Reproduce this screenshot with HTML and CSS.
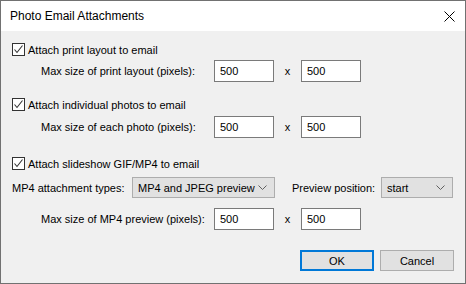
FILE: index.html
```html
<!DOCTYPE html>
<html>
<head>
<meta charset="utf-8">
<link rel="stylesheet" href="styles.css">
</head>
<body>
<div class="window">
  <div class="titlebar">
    <span class="title">Photo Email Attachments</span>
    <svg class="close" width="11" height="11" viewBox="0 0 11 11"><path d="M0.5 0.5 L10.5 10.5 M10.5 0.5 L0.5 10.5" stroke="#000" stroke-width="1" fill="none"/></svg>
  </div>
  <div class="content">
    <div class="row check-row r1">
      <span class="checkbox"><svg width="11" height="11" viewBox="0 0 11 11"><path d="M1.5 5.5 L4 8.5 L9.5 1.5" stroke="#333" stroke-width="1.1" fill="none"/></svg></span>
      <span class="label">Attach print layout to email</span>
    </div>
    <div class="row size-row r2">
      <span class="size-label">Max size of print layout (pixels):</span>
      <span class="input">500</span>
      <span class="times">x</span>
      <span class="input">500</span>
    </div>
    <div class="row check-row r3">
      <span class="checkbox"><svg width="11" height="11" viewBox="0 0 11 11"><path d="M1.5 5.5 L4 8.5 L9.5 1.5" stroke="#333" stroke-width="1.1" fill="none"/></svg></span>
      <span class="label">Attach individual photos to email</span>
    </div>
    <div class="row size-row r4">
      <span class="size-label">Max size of each photo (pixels):</span>
      <span class="input">500</span>
      <span class="times">x</span>
      <span class="input">500</span>
    </div>
    <div class="row check-row r5">
      <span class="checkbox"><svg width="11" height="11" viewBox="0 0 11 11"><path d="M1.5 5.5 L4 8.5 L9.5 1.5" stroke="#333" stroke-width="1.1" fill="none"/></svg></span>
      <span class="label">Attach slideshow GIF/MP4 to email</span>
    </div>
    <div class="row select-row r6">
      <span class="type-label">MP4 attachment types:</span>
      <span class="select select-type"><span>MP4 and JPEG preview</span><svg width="9" height="5" viewBox="0 0 9 5"><path d="M0.5 0.5 L4.5 4.5 L8.5 0.5" stroke="#606060" stroke-width="1" fill="none"/></svg></span>
      <span class="pos-label">Preview position:</span>
      <span class="select select-pos"><span>start</span><svg width="9" height="5" viewBox="0 0 9 5"><path d="M0.5 0.5 L4.5 4.5 L8.5 0.5" stroke="#606060" stroke-width="1" fill="none"/></svg></span>
    </div>
    <div class="row size-row r7">
      <span class="size-label">Max size of MP4 preview (pixels):</span>
      <span class="input">500</span>
      <span class="times">x</span>
      <span class="input">500</span>
    </div>
    <div class="row button-row r8">
      <span class="button default">OK</span>
      <span class="button">Cancel</span>
    </div>
  </div>
</div>
</body>
</html>
```
FILE: styles.css
```css
* { box-sizing: border-box; }
html, body { margin: 0; padding: 0; }
body {
  font-family: "Liberation Sans", Arial, sans-serif;
  font-size: 11px;
  color: #000;
  background: #f0f0f0;
  white-space: nowrap;
}
.window {
  width: 466px;
  height: 284px;
  border: 1px solid #717171;
  background: #f0f0f0;
  display: flex;
  flex-direction: column;
}
.titlebar {
  height: 30px;
  background: #fff;
  display: flex;
  align-items: center;
  padding-left: 9px;
  padding-right: 10px;
  flex-shrink: 0;
}
.title { flex: 1; font-size: 12px; }
.close { display: block; }
.content {
  padding-top: 10px;
  display: flex;
  flex-direction: column;
}
.row { display: flex; align-items: center; }
.check-row { height: 17px; padding-left: 11px; }
.checkbox {
  width: 13px; height: 13px;
  border: 1px solid #333;
  background: #fff;
  display: flex; align-items: center; justify-content: center;
  margin-right: 3px;
}
.checkbox svg { display: block; }
.size-row { height: 22px; padding-left: 40px; }
.size-label { width: 173px; }
.input {
  width: 60px; height: 22px;
  background: #fff;
  border: 1px solid #7a7a7a;
  padding-left: 5px;
  display: flex; align-items: center;
}
.times { width: 27px; text-align: center; }
.r2 { margin-top: 2px; }
.r3 { margin-top: 14px; }
.r4 { margin-top: 3px; }
.r5 { margin-top: 17px; }
.r6 { margin-top: 5px; }
.r7 { margin-top: 10px; }
.r8 { margin-top: 20px; }
.select-row { height: 21px; padding-left: 11px; }
.type-label { width: 120px; }
.select {
  height: 21px;
  background: #e1e1e1;
  border: 1px solid #adadad;
  display: flex; align-items: center; justify-content: space-between;
  padding-left: 5px; padding-right: 7px;
}
.select-type { width: 143px; }
.pos-label { margin-left: 17px; width: 89px; }
.select-pos { width: 72px; }
.button-row { justify-content: flex-end; padding-right: 11px; gap: 6px; }
.button {
  width: 74px; height: 21px;
  background: #e1e1e1;
  border: 1px solid #adadad;
  display: flex; align-items: center; justify-content: center;
}
.button.default { border: 2px solid #0078d7; }
```
